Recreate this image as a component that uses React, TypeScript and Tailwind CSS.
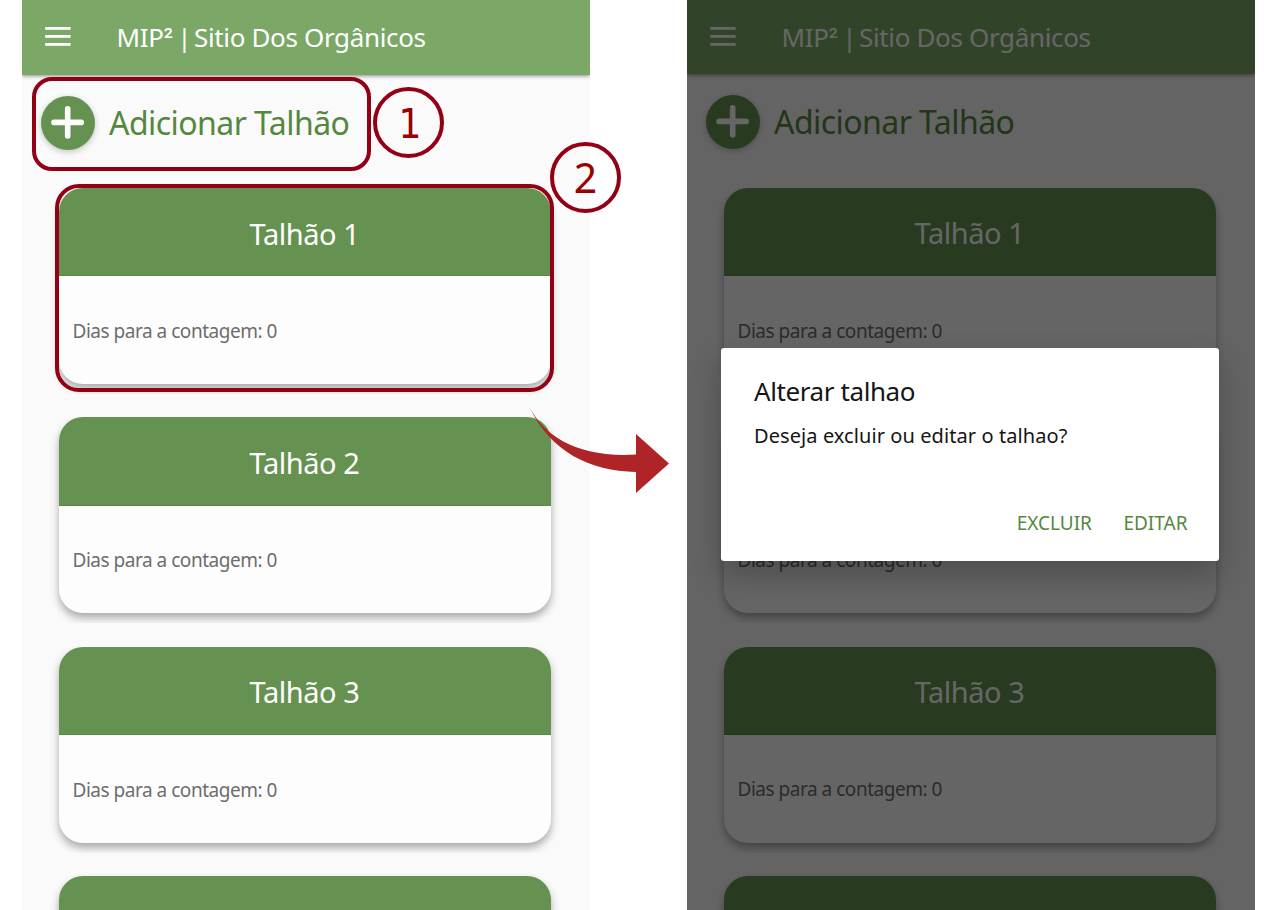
import type { ReactNode } from "react";

const plots = ["Talhão 1", "Talhão 2", "Talhão 3"];

function MenuIcon() {
  return (
    <svg className="h-[19px] w-[26px] shrink-0" viewBox="0 0 26 19" fill="#fff">
      <rect x="0.2" y="0" width="25.4" height="2.8" />
      <rect x="0.2" y="8" width="25.4" height="2.8" />
      <rect x="0.2" y="16" width="25.4" height="2.8" />
    </svg>
  );
}

function PlusIcon() {
  return (
    <svg className="size-[54px]" viewBox="0 0 54 54" stroke="#fff" strokeWidth="5.6" strokeLinecap="round">
      <path d="M26.7 12.8v27.2M13 26.4h27.2" />
    </svg>
  );
}

function PlotCard({ title, textShift }: { title: string; textShift: string }) {
  return (
    <div className="mb-[23.4px] h-[206px] shrink-0 overflow-hidden px-3">
      <div className="flex h-[196px] flex-col overflow-hidden rounded-[24px] bg-[#fdfdfd] shadow-[0_5px_9px_rgba(0,0,0,0.32)]">
        <div className="flex h-[88.6px] shrink-0 items-center justify-center border-b border-[#5b8747] bg-[#659250] pr-[1px] text-[29px] leading-none tracking-[-0.45px] text-white">
          <span className={textShift}>{title}</span>
        </div>
        <div className="flex flex-1 items-center pl-[13.5px] text-[19px] leading-none tracking-[-0.48px] text-[#6d6d6d]">
          <span className={textShift}>Dias para a contagem: 0</span>
        </div>
      </div>
    </div>
  );
}

function Phone({ dimmed = false, children }: { dimmed?: boolean; children?: ReactNode }) {
  return (
    <div className="relative flex h-[910px] w-[568px] shrink-0 flex-col overflow-hidden bg-[#fafafa]">
      <header
        className={`flex shrink-0 items-center bg-[#7ba867] pl-[23px] shadow-[0_1px_4px_rgba(0,0,0,0.45)] ${dimmed ? "h-[74px]" : "h-[75px]"}`}
      >
        <div className="-mt-0.5 flex">
          <MenuIcon />
        </div>
        <h1 className="-mt-px ml-[45.5px] flex whitespace-pre text-[26px] leading-none tracking-[-0.35px] text-white">
          <span>MIP</span>
          <span className="font-['Roboto',sans-serif]">²</span>
          <span className="tracking-[-2.2px]"> | </span>
          <span>Sitio Dos Orgânicos</span>
        </h1>
      </header>
      <div className={`flex shrink-0 items-center pl-[19px] ${dimmed ? "h-[96px]" : "h-[95px]"}`}>
        <div className="rounded-full bg-[#659250] shadow-[0_2px_6px_rgba(0,0,0,0.22)]">
          <PlusIcon />
        </div>
        <span className="ml-[14px] text-[32px] leading-none tracking-[-0.55px] text-[#55883f]">Adicionar Talhão</span>
      </div>
      <div className="flex flex-col pt-[17.8px] pr-[27px] pl-[25px]">
        {plots.map((title) => (
          <PlotCard key={title} title={title} textShift={dimmed ? "mt-0.5" : "mt-[3px]"} />
        ))}
        <div className="h-[40px] px-3">
          <div className="h-full rounded-t-[24px] bg-[#659250] shadow-[0_5px_9px_rgba(0,0,0,0.32)]" />
        </div>
      </div>
      {children}
    </div>
  );
}

function EditDialog() {
  return (
    <div className="absolute inset-0 bg-black/60 px-[34px] pt-[348px]">
      <div className="flex h-[213px] w-[498px] flex-col rounded-[3px] bg-white px-[33px] pt-[30px] text-[#151515] shadow-[0_14px_30px_rgba(0,0,0,0.24)]">
        <h2 className="text-[26px] leading-none tracking-[-0.4px]">Alterar talhao</h2>
        <p className="mt-[22px] text-[20px] leading-none tracking-[0.08px]">Deseja excluir ou editar o talhao?</p>
        <div className="mt-[68px] flex justify-end gap-[31.5px] text-[19px] leading-none text-[#55883f]">
          <button className="leading-none">EXCLUIR</button>
          <button className="-mr-[1.5px] leading-none">EDITAR</button>
        </div>
      </div>
    </div>
  );
}

export default function App() {
  return (
    <div className="relative flex h-[910px] w-[1280px] gap-[97px] overflow-hidden bg-white pl-[22px] font-['Noto_Sans',sans-serif]">
      <Phone />
      <Phone dimmed>
        <EditDialog />
      </Phone>
      <div className="absolute top-[77px] left-[32px] h-[94px] w-[339px] rounded-[20px] border-4 border-[#930016]" />
      <div className="absolute top-[184px] left-[55px] h-[208px] w-[499px] rounded-[24px] border-4 border-[#930016]" />
      <div className="absolute top-[87px] left-[373px] flex size-[71px] items-center justify-center rounded-full border-4 border-[#930016] pt-0.5 pl-[3px] font-['DejaVu_Sans',sans-serif] text-[40px] leading-none text-[#990000] [font-stretch:condensed]">
        1
      </div>
      <div className="absolute top-[142px] left-[550px] flex size-[71px] items-center justify-center rounded-full border-4 border-[#930016] text-[41px] leading-none text-[#990000]">
        2
      </div>
      <svg className="absolute top-[400px] left-[520px] h-[100px] w-[160px]" viewBox="520 400 160 100">
        <path
          d="M529 406C544 437 579 458 636 454.5V434L669 463.5L636 493V472C590 471 550 452 529 406Z"
          fill="#ae2427"
        />
      </svg>
    </div>
  );
}
